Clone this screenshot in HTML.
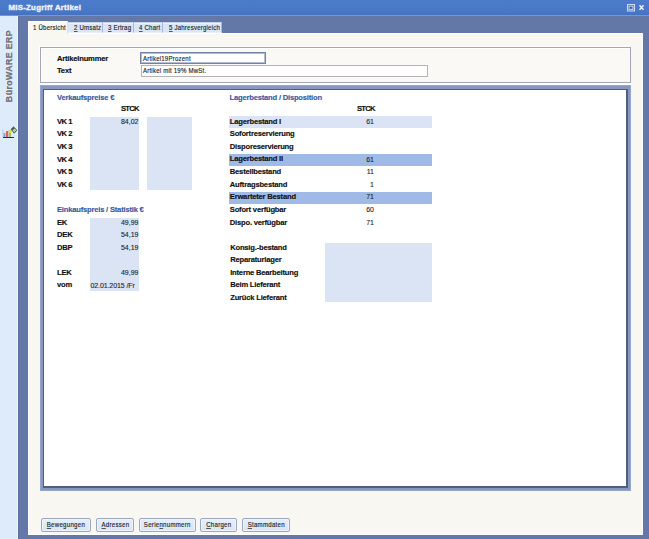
<!DOCTYPE html>
<html><head><meta charset="utf-8">
<style>
*{margin:0;padding:0;box-sizing:border-box}
html,body{width:649px;height:539px;overflow:hidden;background:#6379a8;font-family:"Liberation Sans",sans-serif;color:#111}
.a{position:absolute;white-space:nowrap}
.t{font-size:7.6px;letter-spacing:0.25px;color:#1c1c1c;-webkit-text-stroke:0.15px #1c1c1c;transform:scaleX(0.8);transform-origin:0 0}
.c{text-align:center;font-size:7.6px}.c span{display:inline-block;transform:scaleX(0.8);font-size:7.6px;letter-spacing:0.35px;color:#1c1c1c;-webkit-text-stroke:0.15px #1c1c1c}
.b{font-size:7.6px;font-weight:bold;letter-spacing:-0.2px;color:#101010;-webkit-text-stroke:0.15px #101010}
.h{font-size:7.6px;font-weight:bold;letter-spacing:-0.2px;color:#36569e;-webkit-text-stroke:0.12px #36569e}
.ttl{font-size:7.8px;font-weight:bold;letter-spacing:0.28px;color:#eef3fc;-webkit-text-stroke:0.4px #eef3fc}
u{text-decoration:underline;text-decoration-thickness:0.6px;text-underline-offset:1px;text-decoration-color:#555}
.n{font-size:7px;letter-spacing:0;color:#1c1c1c;-webkit-text-stroke:0.1px #1c1c1c}
.fld{background:#dbe4f4}
.hl1{background:#dbe4f4}
.hl2{background:#9fbae6}
</style></head><body>
<div class="a " style="left:0px;top:0px;width:649px;height:15px;background:linear-gradient(#4b7bca 0,#4a78c6 11px,#4372c2 15px)"></div>
<div class="a " style="left:0px;top:15px;width:649px;height:1px;background:#7797d2"></div>
<div class="a ttl" style="left:8.5px;top:2.80px;">MIS-Zugriff Artikel</div>
<svg class="a" style="left:626px;top:3px" width="22" height="10" viewBox="0 0 22 10">
<rect x="1.5" y="1.5" width="7" height="6.5" fill="none" stroke="#cfdcf5" stroke-width="1"/>
<rect x="3" y="3.2" width="4" height="3.2" fill="none" stroke="#d8e3f7" stroke-width="0.8"/>
<path d="M4.3 4 L6 4.8 L4.3 5.6 Z" fill="#2a3e70"/>
<path d="M13.5 2.3 L17.5 6.8 M17.5 2.3 L13.5 6.8" stroke="#f4f7fd" stroke-width="1.3"/>
</svg>
<div class="a " style="left:0px;top:16px;width:18px;height:523px;background:#deebfa;border-right:1px solid #eaf4fe"></div>
<div class="a" style="left:9.3px;top:66px;transform:translate(-50%,-50%) rotate(-90deg);font-size:8.8px;font-weight:bold;color:#6e727c;-webkit-text-stroke:0.3px #6e727c;text-shadow:0.3px -1.2px 0 #fff;letter-spacing:0.4px">BüroWARE ERP</div>
<svg class="a" style="left:1px;top:126px" width="17" height="13" viewBox="0 0 17 13">
<rect x="1.5" y="3" width="1" height="8" fill="#c8ccd8"/>
<rect x="2.5" y="7" width="2" height="4" fill="#86a4d8"/>
<rect x="5" y="5" width="2.2" height="6" fill="#dc6060"/>
<rect x="7.7" y="4" width="2.2" height="7" fill="#8cc078"/>
<path d="M7.7 5 L10 3 L11 6 L9.9 7 L7.7 7 Z" fill="#ecdc48"/>
<rect x="2" y="11" width="11" height="1" fill="#283048"/>
<path d="M10.2 3.2 L12.6 1 L15.8 4.2 L13.2 7.2 Z" fill="#b0d8a0" stroke="#3c4444" stroke-width="0.9"/>
<path d="M10.6 2.8 L12.6 1 L13.8 2.2 L11.6 4.2 Z" fill="#4a5252"/>
</svg>
<div class="a " style="left:18px;top:16px;width:631px;height:523px;background:#6478a8;border-left:1px solid #5d72a0"></div>
<div class="a " style="left:28px;top:33px;width:615px;height:502px;background:#f8f7f2;border-top:1px solid #fff;border-left:1px solid #fff;border-right:1px solid #fbfcfd;border-bottom:1px solid #fdfefe"></div>
<div class="a " style="left:28px;top:21px;width:40px;height:13px;background:#f8f7f2;border-top:1px solid #fff;border-left:1px solid #fff;border-right:1px solid #dfe3ea"></div>
<div class="a " style="left:68px;top:22px;width:35px;height:11px;background:#dae6f6;border:1px solid #a9b8d4;border-top-color:#c4d2ea;border-bottom:1px solid #e9eff8;border-left:none;box-shadow:inset 0 1px 0 #eef4fc"></div>
<div class="a " style="left:103px;top:22px;width:31px;height:11px;background:#dae6f6;border:1px solid #a9b8d4;border-top-color:#c4d2ea;border-bottom:1px solid #e9eff8;border-left:none;box-shadow:inset 0 1px 0 #eef4fc"></div>
<div class="a " style="left:134px;top:22px;width:29px;height:11px;background:#dae6f6;border:1px solid #a9b8d4;border-top-color:#c4d2ea;border-bottom:1px solid #e9eff8;border-left:none;box-shadow:inset 0 1px 0 #eef4fc"></div>
<div class="a " style="left:163px;top:22px;width:59px;height:11px;background:#dae6f6;border:1px solid #a9b8d4;border-top-color:#c4d2ea;border-bottom:1px solid #e9eff8;border-left:none;box-shadow:inset 0 1px 0 #eef4fc"></div>
<div class="a t" style="left:33px;top:22.60px;">1 Übersicht</div>
<div class="a t" style="left:73.5px;top:22.60px;"><u>2</u> Umsatz</div>
<div class="a t" style="left:108px;top:22.60px;"><u>3</u> Ertrag</div>
<div class="a t" style="left:138.7px;top:22.60px;"><u>4</u> Chart</div>
<div class="a t" style="left:169.2px;top:22.60px;"><u>5</u> Jahresvergleich</div>
<div class="a " style="left:40px;top:47px;width:591px;height:36px;border:1px solid #a2a6b8;box-shadow:1px 1px 0 #fff inset,-1px -1px 0 #fff;background:#faf9f5"></div>
<div class="a b" style="left:57px;top:54.00px;">Artikelnummer</div>
<div class="a b" style="left:57px;top:66.30px;">Text</div>
<div class="a " style="left:140px;top:52px;width:126px;height:12px;background:#fff;border:1px solid #7480a6;box-shadow:inset 0 0 0 1px #b4bcd4"></div>
<div class="a " style="left:141px;top:65px;width:287px;height:12px;background:#fff;border:1px solid #b4b4b8"></div>
<div class="a t" style="left:143px;top:53.60px;">Artikel19Prozent</div>
<div class="a t" style="left:143px;top:65.90px;">Artikel mit 19% MwSt.</div>
<div class="a " style="left:40px;top:83px;width:591px;height:2px;background:#fff"></div>
<div class="a " style="left:40px;top:85px;width:591px;height:406px;background:#8797bf;box-shadow:inset 0 0 0 1px #96a6cc"></div>
<div class="a " style="left:43px;top:89px;width:585px;height:399px;background:#525e7a"></div>
<div class="a " style="left:44px;top:90px;width:582px;height:396px;background:#fff"></div>
<div class="a h" style="left:57px;top:92.50px;">Verkaufspreise €</div>
<div class="a b" style="left:121px;top:103.90px;letter-spacing:-0.7px">STCK</div>
<div class="a fld" style="left:90px;top:117px;width:49px;height:73px;"></div>
<div class="a fld" style="left:147px;top:117px;width:45px;height:73px;"></div>
<div class="a b" style="left:57px;top:116.80px;letter-spacing:-0.5px">VK 1</div>
<div class="a b" style="left:57px;top:129.42px;letter-spacing:-0.5px">VK 2</div>
<div class="a b" style="left:57px;top:142.04px;letter-spacing:-0.5px">VK 3</div>
<div class="a b" style="left:57px;top:154.66px;letter-spacing:-0.5px">VK 4</div>
<div class="a b" style="left:57px;top:167.28px;letter-spacing:-0.5px">VK 5</div>
<div class="a b" style="left:57px;top:179.90px;letter-spacing:-0.5px">VK 6</div>
<div class="a n" style="right:510.5px;top:118.00px;">84,02</div>
<div class="a h" style="left:57px;top:205.10px;">Einkaufspreis / Statistik €</div>
<div class="a fld" style="left:90px;top:218px;width:49px;height:73px;"></div>
<div class="a b" style="left:57px;top:217.60px;">EK</div>
<div class="a b" style="left:57px;top:230.10px;">DEK</div>
<div class="a b" style="left:57px;top:242.50px;">DBP</div>
<div class="a b" style="left:57px;top:267.50px;">LEK</div>
<div class="a b" style="left:57px;top:280.00px;">vom</div>
<div class="a n" style="right:510.5px;top:218.80px;">49,99</div>
<div class="a n" style="right:510.5px;top:231.30px;">54,19</div>
<div class="a n" style="right:510.5px;top:243.70px;">54,19</div>
<div class="a n" style="right:510.5px;top:268.70px;">49,99</div>
<div class="a n" style="left:90.5px;top:281.70px;letter-spacing:-0.1px">02.01.2015 /Fr</div>
<div class="a h" style="left:229.6px;top:92.50px;">Lagerbestand / Disposition</div>
<div class="a b" style="left:357px;top:103.90px;letter-spacing:-0.7px">STCK</div>
<div class="a hl1" style="left:229px;top:116px;width:203px;height:12px;"></div>
<div class="a hl2" style="left:229px;top:154px;width:203px;height:12px;"></div>
<div class="a hl2" style="left:229px;top:192px;width:203px;height:12px;"></div>
<div class="a b" style="left:229.8px;top:116.50px;">Lagerbestand I</div>
<div class="a n" style="right:275px;top:117.70px;">61</div>
<div class="a b" style="left:229.8px;top:129.13px;">Sofortreservierung</div>
<div class="a b" style="left:229.8px;top:141.76px;">Disporeservierung</div>
<div class="a b" style="left:229.8px;top:154.39px;">Lagerbestand II</div>
<div class="a n" style="right:275px;top:155.59px;">61</div>
<div class="a b" style="left:229.8px;top:167.02px;">Bestellbestand</div>
<div class="a n" style="right:275px;top:168.22px;">11</div>
<div class="a b" style="left:229.8px;top:179.65px;">Auftragsbestand</div>
<div class="a n" style="right:275px;top:180.85px;">1</div>
<div class="a b" style="left:229.8px;top:192.28px;">Erwarteter Bestand</div>
<div class="a n" style="right:275px;top:193.48px;">71</div>
<div class="a b" style="left:229.8px;top:204.91px;">Sofort verfügbar</div>
<div class="a n" style="right:275px;top:206.11px;">60</div>
<div class="a b" style="left:229.8px;top:217.54px;">Dispo. verfügbar</div>
<div class="a n" style="right:275px;top:218.74px;">71</div>
<div class="a fld" style="left:325px;top:243px;width:107px;height:59px;"></div>
<div class="a b" style="left:230.2px;top:242.50px;">Konsig.-bestand</div>
<div class="a b" style="left:230.2px;top:255.13px;">Reparaturlager</div>
<div class="a b" style="left:230.2px;top:267.76px;">Interne Bearbeitung</div>
<div class="a b" style="left:230.2px;top:280.39px;">Beim Lieferant</div>
<div class="a b" style="left:230.2px;top:293.02px;">Zurück Lieferant</div>
<div class="a " style="left:41px;top:518px;width:50px;height:14px;border:1px solid #9ea8bc;border-radius:2px;background:linear-gradient(#e6effb,#d8e5f7);box-shadow:inset 0 0 0 1px #eef4fc"></div>
<div class="a c" style="left:21px;width:90px;top:520.10px"><span><u>B</u>ewegungen</span></div>
<div class="a " style="left:96px;top:518px;width:38px;height:14px;border:1px solid #9ea8bc;border-radius:2px;background:linear-gradient(#e6effb,#d8e5f7);box-shadow:inset 0 0 0 1px #eef4fc"></div>
<div class="a c" style="left:76px;width:78px;top:520.10px"><span><u>A</u>dressen</span></div>
<div class="a " style="left:139px;top:518px;width:57px;height:14px;border:1px solid #9ea8bc;border-radius:2px;background:linear-gradient(#e6effb,#d8e5f7);box-shadow:inset 0 0 0 1px #eef4fc"></div>
<div class="a c" style="left:119px;width:97px;top:520.10px"><span>Serie<u>n</u>nummern</span></div>
<div class="a " style="left:200px;top:518px;width:37px;height:14px;border:1px solid #9ea8bc;border-radius:2px;background:linear-gradient(#e6effb,#d8e5f7);box-shadow:inset 0 0 0 1px #eef4fc"></div>
<div class="a c" style="left:180px;width:77px;top:520.10px"><span><u>C</u>hargen</span></div>
<div class="a " style="left:242px;top:518px;width:48px;height:14px;border:1px solid #9ea8bc;border-radius:2px;background:linear-gradient(#e6effb,#d8e5f7);box-shadow:inset 0 0 0 1px #eef4fc"></div>
<div class="a c" style="left:222px;width:88px;top:520.10px"><span><u>S</u>tammdaten</span></div>
</body></html>
